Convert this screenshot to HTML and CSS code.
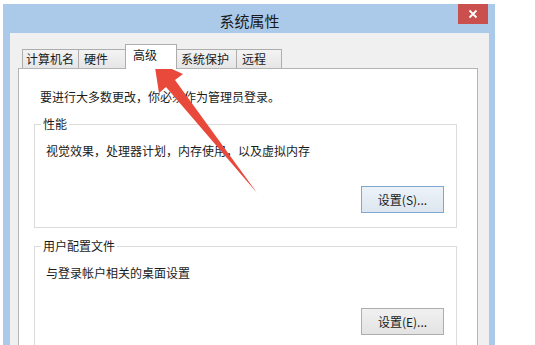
FILE: index.html
```html
<!DOCTYPE html>
<html lang="zh-CN">
<head>
<meta charset="utf-8">
<title>系统属性</title>
<link rel="stylesheet" href="styles.css">
</head>
<body>
<div class="window">
  <div class="titlebar">
    <span></span>
    <span class="title">系统属性</span>
    <button class="close" type="button"><svg width="10" height="10" viewBox="0 0 10 10"><path d="M1.5 1.5 L8.5 8.5 M8.5 1.5 L1.5 8.5" stroke="#fff" stroke-width="1.8"/></svg></button>
  </div>
  <div class="client">
    <div class="tabs">
      <div class="tab t1">计算机名</div>
      <div class="tab t2">硬件</div>
      <div class="tab t3 selected">高级</div>
      <div class="tab t4">系统保护</div>
      <div class="tab t5">远程</div>
    </div>
    <div class="panel">
      <p class="note">要进行大多数更改，你必须作为管理员登录。</p>
      <fieldset class="group">
        <legend>性能</legend>
        <p class="desc">视觉效果，处理器计划，内存使用，以及虚拟内存</p>
        <div class="actions"><button class="btn default" type="button">设置(S)...</button></div>
      </fieldset>
      <fieldset class="group second">
        <legend>用户配置文件</legend>
        <p class="desc">与登录帐户相关的桌面设置</p>
        <div class="actions"><button class="btn" type="button">设置(E)...</button></div>
      </fieldset>
    </div>
  </div>
</div>
<svg class="arrow" width="535" height="345" viewBox="0 0 535 345">
  <polygon points="154,61 183,74 175,80 257,193 166,87 159,93" fill="#e8493b"/>
</svg>
</body>
</html>
```

FILE: styles.css
```css
* { box-sizing: border-box; }
html, body { margin: 0; padding: 0; }
body {
  width: 535px;
  height: 345px;
  overflow: hidden;
  background: #ffffff;
  font-family: "Noto Sans CJK SC", "Noto Sans", sans-serif;
  font-size: 12px;
  color: #1b1b1b;
  position: relative;
}
.window {
  margin: 4px 0 0 3px;
  width: 492px;
  height: 341px;
  overflow: hidden;
  background: #abc9e8;
  padding: 0 6px 0 7px;
  display: flex;
  flex-direction: column;
}
.titlebar {
  height: 29px;
  flex: none;
  display: grid;
  grid-template-columns: 1fr auto 1fr;
  align-items: start;
}
.title {
  font-size: 15px;
  line-height: 17px;
  margin-top: 8px;
  color: #1a1a1a;
}
.close {
  justify-self: end;
  width: 30px;
  height: 20px;
  margin-right: 1px;
  border: none;
  padding: 0;
  background: #c9504c;
  display: flex;
  align-items: center;
  justify-content: center;
}
.client {
  flex: 1;
  min-height: 0;
  background: #f0f0f0;
  padding: 11px 11px 0 8px;
  display: flex;
  flex-direction: column;
}
.tabs {
  height: 24px;
  flex: none;
  display: flex;
  align-items: flex-end;
  padding-left: 4px;
  position: relative;
  z-index: 1;
}
.tab {
  height: 19px;
  border: 1px solid #adadad;
  border-bottom: none;
  border-right: none;
  background: linear-gradient(#f3f3f3, #e6e6e6);
  line-height: 17px;
  padding-left: 3px;
  color: #1a1a1a;
}
.t1 { width: 56px; }
.t2 { width: 47px; padding-left: 5px; }
.t3 { width: 52px; }
.t4 { width: 59px; padding-left: 4px; }
.t5 { width: 46px; border-right: 1px solid #adadad; padding-left: 5px; }
.tab.selected {
  height: 25px;
  margin-bottom: -1px;
  background: #ffffff;
  border-right: 1px solid #adadad;
  padding-left: 7px;
  line-height: 20px;
}
.tab.selected + .tab { border-left: none; }
.panel {
  flex: 1;
  min-height: 0;
  overflow: hidden;
  background: #ffffff;
  border: 1px solid #b4b4b4;
  border-bottom: none;
  padding: 20px 20px 0 15px;
}
.note {
  margin: 0 0 11px 6px;
  line-height: 16px;
}
.group {
  margin: 0;
  border: 1px solid #dcdcdc;
  padding: 0 12px 14px 11px;
  min-width: 0;
}
.group legend {
  padding: 0 2px;
  margin-left: -5px;
  line-height: 16px;
}
.group.second { margin-top: 10px; }
.desc {
  margin: 11px 0 0 0;
  line-height: 16px;
}
.actions {
  display: flex;
  justify-content: flex-end;
  margin-top: 27px;
}
.btn {
  width: 83px;
  height: 27px;
  border: 1px solid #adadad;
  background: linear-gradient(#f0f0f0, #e3e3e3);
  font-family: "Noto Sans CJK SC", "Noto Sans", sans-serif;
  font-size: 12px;
  color: #1a1a1a;
  padding: 0;
}
.btn.default {
  border-color: #7ea8d2;
  background: linear-gradient(#ecf2f8, #dde6ef);
}
.arrow {
  position: absolute;
  left: 0;
  top: 0;
  pointer-events: none;
}
```
